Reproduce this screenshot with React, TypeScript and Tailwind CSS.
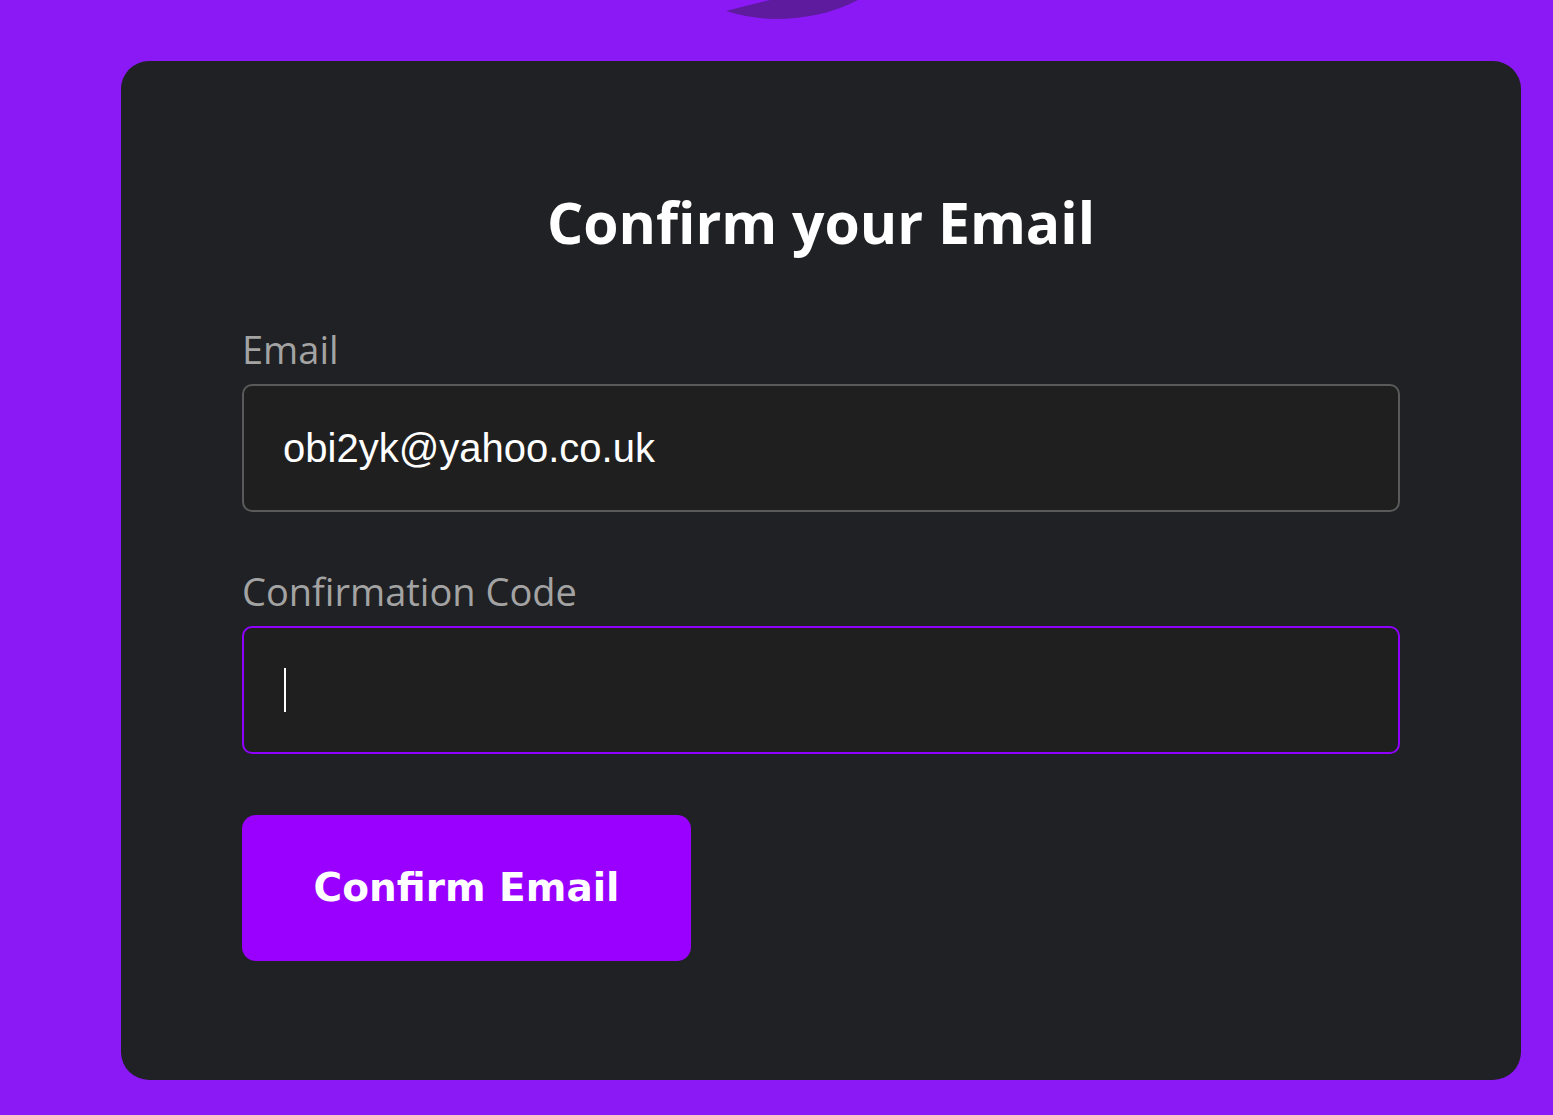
export default function App() {
  return (
    <div className="relative min-h-screen w-full overflow-hidden bg-[#8a19f5] pt-[61px] pb-[35px]">
      {/* crescent peeking in from above */}
      <svg
        className="absolute left-0 top-0"
        width="1553"
        height="30"
        viewBox="0 0 1553 30"
        aria-hidden
      >
        <path
          d="M726 11 Q748 5 770 0 L858 0 Q822 19 774 19 Q748 18 726 11 Z"
          fill="#5e1b9e"
        />
      </svg>

      <div className="ml-[121px] w-[1400px] rounded-[28px] bg-[#202124] px-[121px] pt-[125px] pb-[119px]">
        <h1 className="mb-[68px] text-center font-['Open_Sans',sans-serif] text-[57px] font-bold leading-[72px] text-white">
          Confirm your Email
        </h1>

        <label className="mb-[12px] block font-['Open_Sans',sans-serif] text-[38px] leading-[46px] text-[#a3a3a3]">
          Email
        </label>
        <input
          type="email"
          readOnly
          value="obi2yk@yahoo.co.uk"
          className="block h-[128px] w-full rounded-[10px] border-2 border-[#5a5a5a] bg-[#1f1f1f] px-[39px] font-['Liberation_Sans',Arial,sans-serif] text-[40px] text-white outline-none"
        />

        <label className="mt-[56px] mb-[12px] block font-['Open_Sans',sans-serif] text-[38px] leading-[46px] text-[#a3a3a3]">
          Confirmation Code
        </label>
        <div className="flex h-[128px] w-full items-center rounded-[10px] border-2 border-[#9000ff] bg-[#1f1f1f] px-[40px]">
          <span className="h-[44px] w-[2px] bg-white" />
        </div>

        <button
          type="button"
          className="mt-[61px] flex h-[146px] w-[449px] items-center justify-center rounded-[14px] bg-[#9900ff] font-['DejaVu_Sans',sans-serif] text-[39px] font-bold text-white"
        >
          Confirm Email
        </button>
      </div>
    </div>
  );
}
